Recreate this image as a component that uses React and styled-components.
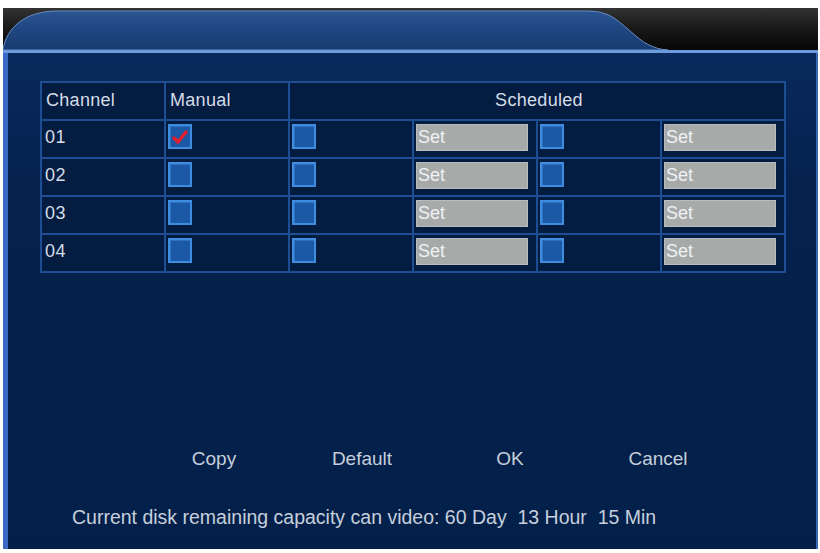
import React from 'react';
import styled, { createGlobalStyle } from 'styled-components';

const GlobalStyle = createGlobalStyle`
  html, body {
    margin: 0;
    padding: 0;
    background: #ffffff;
  }
  body {
    font-family: 'Liberation Sans', Arial, sans-serif;
  }
`;

const Screen = styled.div`
  width: 815px;
  height: 541px;
  margin: 8px 0 0 3px;
  display: flex;
  flex-direction: column;
  background: #06234f;
`;

const TopBar = styled.div`
  height: 42px;
  background: linear-gradient(to bottom, #333333 0%, #1c1c1c 40%, #060606 100%);
  line-height: 0;
`;

const TabLine = styled.div`
  height: 3px;
  background: #6d9be0;
`;

const Body = styled.div`
  flex: 1;
  display: flex;
  flex-direction: column;
  border-left: 5px solid #3b69c6;
  border-right: 2px solid #3a6ab8;
  background: linear-gradient(to bottom, #082a5c 0%, #05214d 30%, #03204a 100%);
  padding-top: 28px;
`;

const Grid = styled.div`
  width: 742px;
  margin-left: 32px;
  display: grid;
  grid-template-columns: repeat(6, 1fr);
  grid-auto-rows: 36px;
  gap: 2px;
  padding: 2px;
  background: #1d4d92;
`;

const HeadCell = styled.div`
  height: 34px;
  margin-bottom: 2px;
  background: #041c40;
  display: flex;
  align-items: center;
  justify-content: ${p => (p.$center ? 'center' : 'flex-start')};
  padding: 0 0 2px 4px;
  grid-column: span ${p => p.$span || 1};
  color: #d4dde8;
  font-size: 18px;
  letter-spacing: 0.3px;
`;

const Cell = styled.div`
  background: #041c40;
  display: flex;
  align-items: flex-start;
  padding: 3px 0 0 2px;
  color: #d4dde8;
  font-size: 18px;
`;

const ChannelText = styled.span`
  padding: 3px 0 0 1px;
  letter-spacing: 0.5px;
`;

const Check = styled.div`
  width: 20px;
  height: 21px;
  border: 2px solid #3f8de0;
  background: #1b58a6;
  box-shadow: inset 1px 1px 0 #2f6fc0;
  display: flex;
  align-items: center;
  justify-content: center;
`;

const SetButton = styled.div`
  width: 109px;
  height: 25px;
  background: #a8aaaa;
  border: 1px solid #b8bcbe;
  color: #eef2f4;
  font-size: 18px;
  line-height: 25px;
  padding-left: 1px;
  box-sizing: content-box;
`;

const ActionRow = styled.div`
  display: grid;
  grid-template-columns: repeat(4, 148px);
  padding-left: 132px;
  margin-top: auto;
  margin-bottom: 34px;
`;

const Action = styled.div`
  text-align: center;
  color: #c6cfdb;
  font-size: 19px;
  line-height: 24px;
`;

const Footer = styled.div`
  padding-left: 64px;
  margin-bottom: 20px;
  color: #c6cfdb;
  font-size: 19.5px;
  line-height: 24px;
`;

const Tick = () => (
  <svg width="16" height="14" viewBox="0 0 16 14">
    <path d="M2 8 L6 12 L14 2" stroke="#e0202c" strokeWidth="3.5" fill="none" strokeLinecap="round" strokeLinejoin="round" />
  </svg>
);

const Checkbox = ({ checked }) => <Check>{checked && <Tick />}</Check>;

const channels = [
  { id: '01', manual: true },
  { id: '02', manual: false },
  { id: '03', manual: false },
  { id: '04', manual: false },
];

const App = () => {
  return (
    <>
      <GlobalStyle />
      <Screen>
        <TopBar>
          <svg width="815" height="42" viewBox="0 0 815 42">
            <defs>
              <linearGradient id="tabFill" x1="0" y1="0" x2="0" y2="1">
                <stop offset="0" stopColor="#2b5592" />
                <stop offset="0.5" stopColor="#1f4680" />
                <stop offset="1" stopColor="#173b72" />
              </linearGradient>
            </defs>
            <path
              d="M0 42 C3 20 22 3 54 3 L585 3 C606 3 614 12 626 22 C640 35 650 41 665 42 Z"
              fill="url(#tabFill)"
              stroke="#6a8cc0"
              strokeWidth="1"
            />
          </svg>
        </TopBar>
        <TabLine />
        <Body>
          <Grid>
            <HeadCell>Channel</HeadCell>
            <HeadCell>Manual</HeadCell>
            <HeadCell $span={4} $center>Scheduled</HeadCell>
            {channels.map(ch => (
              <React.Fragment key={ch.id}>
                <Cell><ChannelText>{ch.id}</ChannelText></Cell>
                <Cell><Checkbox checked={ch.manual} /></Cell>
                <Cell><Checkbox /></Cell>
                <Cell><SetButton>Set</SetButton></Cell>
                <Cell><Checkbox /></Cell>
                <Cell><SetButton>Set</SetButton></Cell>
              </React.Fragment>
            ))}
          </Grid>
          <ActionRow>
            <Action>Copy</Action>
            <Action>Default</Action>
            <Action>OK</Action>
            <Action>Cancel</Action>
          </ActionRow>
          <Footer>Current disk remaining capacity can video: 60 Day&nbsp; 13 Hour&nbsp; 15 Min</Footer>
        </Body>
      </Screen>
    </>
  );
};

export default App;
